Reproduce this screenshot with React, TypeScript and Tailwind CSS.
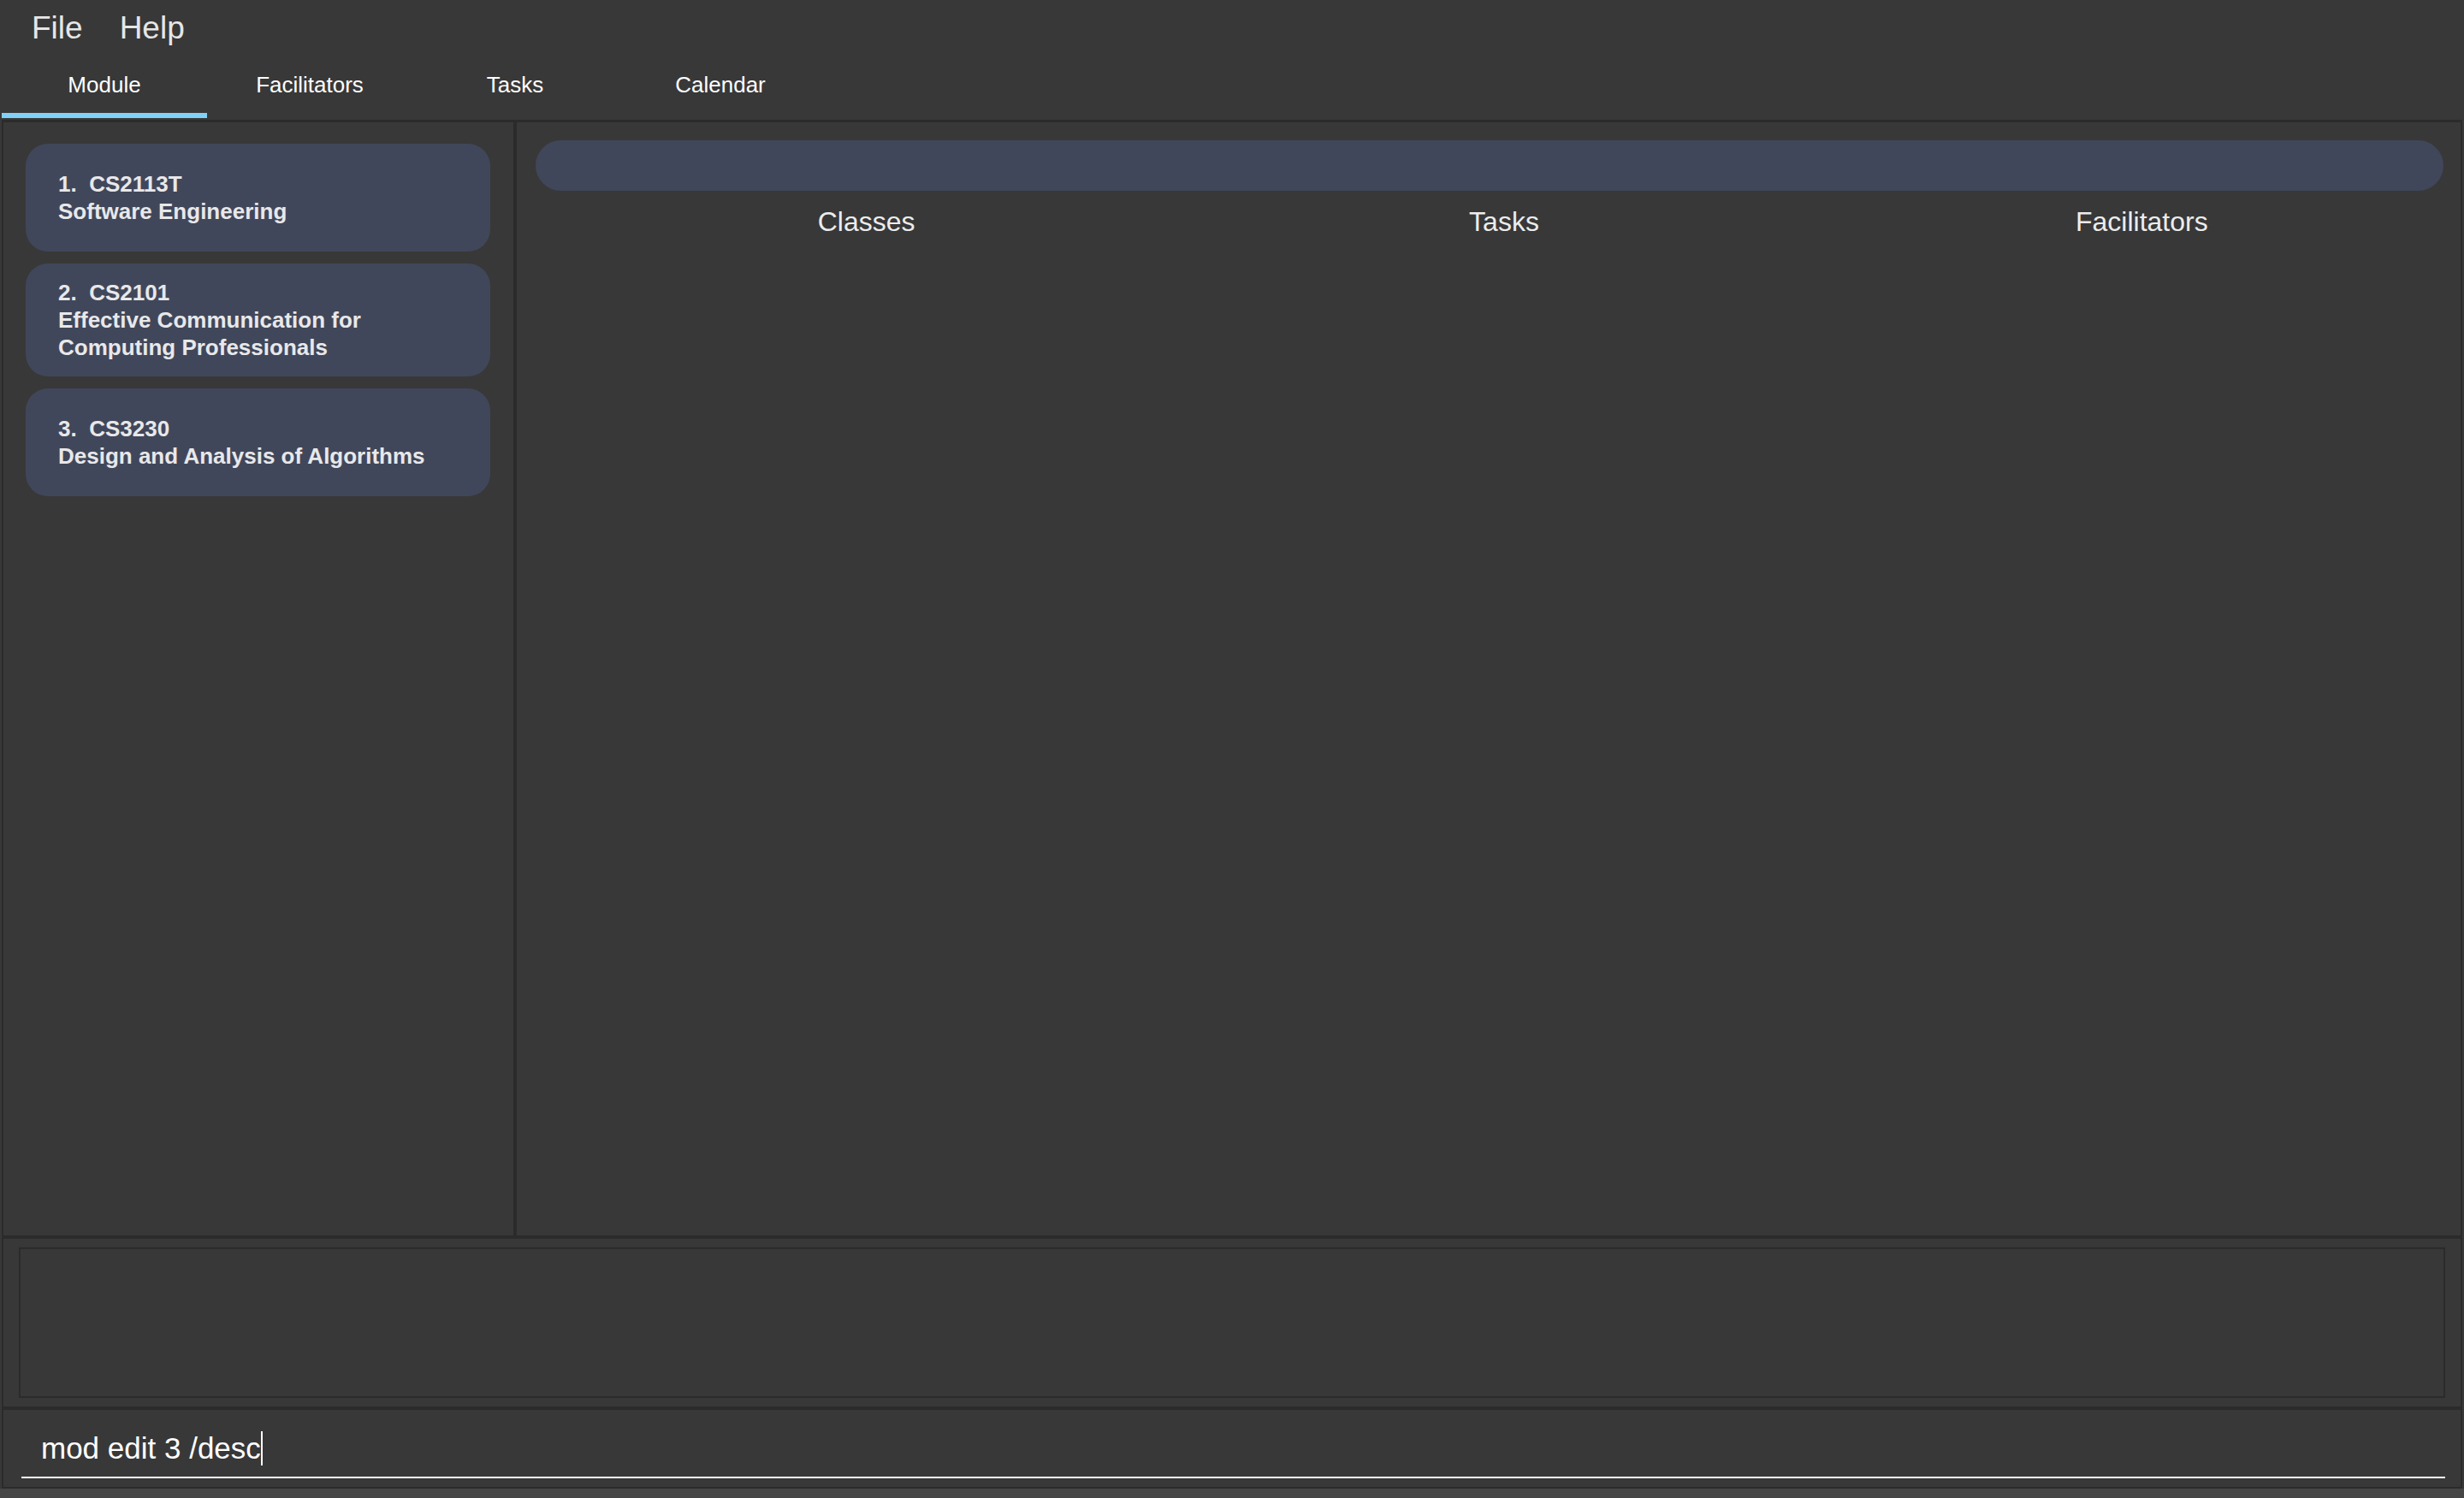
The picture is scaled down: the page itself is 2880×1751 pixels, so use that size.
import React from 'react';

interface Module {
  code: string;
  title: string;
}

const modules: Module[] = [
  { code: 'CS2113T', title: 'Software Engineering' },
  { code: 'CS2101', title: 'Effective Communication for Computing Professionals' },
  { code: 'CS3230', title: 'Design and Analysis of Algorithms' },
];

const tabs = ['Module', 'Facilitators', 'Tasks', 'Calendar'];

const ModuleCard: React.FC<{ index: number; item: Module }> = ({ index, item }) => {
  return (
    <div className="min-h-[126px] rounded-[26px] bg-[#41475a] pl-[38px] pr-[38px] py-[18px] flex flex-col justify-center">
      <div className="text-[26px] leading-[32px] font-bold text-[#e8e8ea] whitespace-pre">
        {index + 1}.{'  '}{item.code}
      </div>
      <div className="text-[26px] leading-[32px] font-bold text-[#e8e8ea]">{item.title}</div>
    </div>
  );
};

const App: React.FC = () => {
  return (
    <div className="w-[2880px] h-[1751px] bg-[#383838] flex flex-col overflow-hidden font-['Liberation_Sans',Arial,sans-serif]">
      {/* menu bar */}
      <div className="h-[66px] flex items-start gap-[43px] pl-[37px] pt-[14px] text-[37px] leading-none text-[#e6e6e6]">
        <span>File</span>
        <span>Help</span>
      </div>

      {/* tab strip */}
      <div className="h-[74px] flex pl-[2px]">
        {tabs.map((t, i) => (
          <div key={t} className="w-[240px] h-[72px] flex flex-col items-center">
            <div className="pt-[20px] text-[26px] leading-none text-white">{t}</div>
            <div className={i === 0 ? 'mt-auto h-[6px] w-full bg-[#80d0f8]' : 'mt-auto h-[6px] w-full'} />
          </div>
        ))}
      </div>

      {/* main split */}
      <div className="h-[1308px] mx-[2px] flex border-t-[3px] border-b-[4px] border-x-[2px] border-[#2b2b2b]">
        <div className="w-[600px] border-r-[4px] border-[#2b2b2b] pt-[25px] pl-[26px] pr-[27px] flex flex-col gap-[14px]">
          {modules.map((m, i) => (
            <ModuleCard key={m.code} index={i} item={m} />
          ))}
        </div>
        <div className="flex-1 flex flex-col">
          <div className="mt-[21px] ml-[22px] mr-[20px] h-[59px] rounded-full bg-[#41475a]" />
          <div className="mt-[20px] pl-[36px] grid grid-cols-3 text-[32px] leading-none text-[#ececec]">
            <div className="text-center">Classes</div>
            <div className="text-center">Tasks</div>
            <div className="text-center">Facilitators</div>
          </div>
        </div>
      </div>

      {/* result display */}
      <div className="h-[200px] mx-[2px] border-x-[2px] border-b-[4px] border-[#2b2b2b] px-[18px] pt-[10px] pb-[10px]">
        <div className="h-full border-2 border-[#2b2b2b]" />
      </div>

      {/* command box */}
      <div className="h-[92px] mx-[2px] border-x-[2px] border-b-[2px] border-[#2b2b2b] pl-[21px] pr-[18px]">
        <div className="border-b-2 border-white pt-[25px] pb-[13px] pl-[23px] text-[35px] leading-none text-white">
          mod edit 3 /desc
          <span className="inline-block w-[2px] h-[40px] bg-white align-[-8px]" />
        </div>
      </div>

      {/* status strip */}
      <div className="flex-1 bg-[#464646]" />
    </div>
  );
};

export default App;
